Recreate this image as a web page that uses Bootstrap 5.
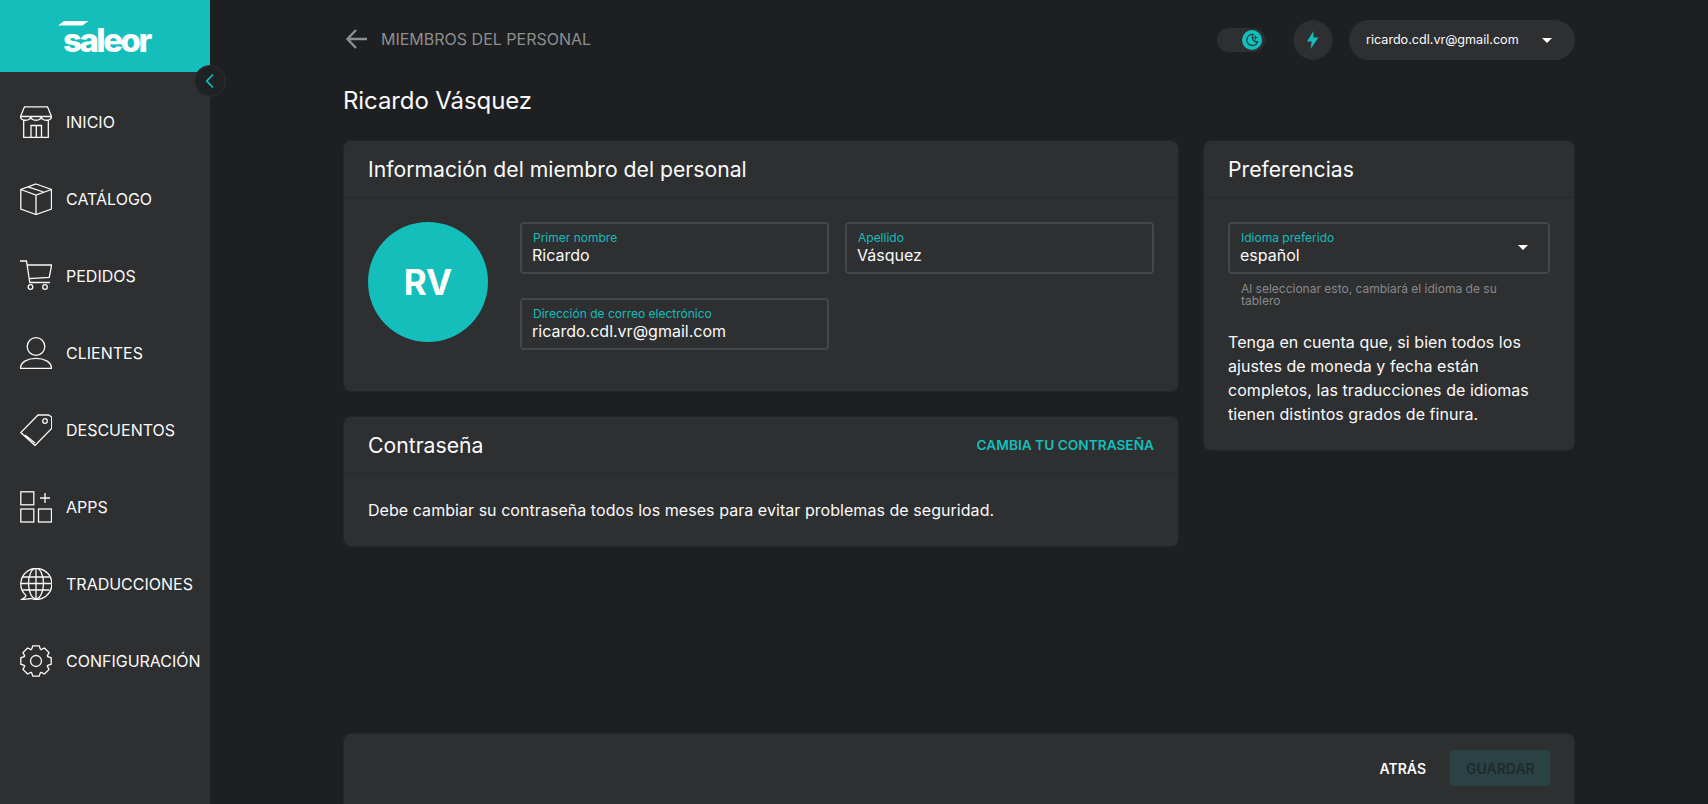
<!DOCTYPE html>
<html lang="es">
<head>
  <meta charset="UTF-8"/>
  <meta name="viewport" content="width=device-width, initial-scale=1.0"/>
  <title>Ricardo Vásquez</title>
  <link href="https://cdn.jsdelivr.net/npm/bootstrap@5.3.0/dist/css/bootstrap.min.css" rel="stylesheet"/>
  <style>
    html, body {
      height: 100%;
      overflow: hidden;
    }
    body {
      display: flex;
      background-color: #1d1f21;
      color: #fafafa;
      font-family: Inter, "Liberation Sans", sans-serif;
      font-size: 16px;
    }

    /* Sidebar */
    .side-bar {
      width: 210px;
      flex: none;
      position: relative;
      background-color: #2e2f31;
    }
    .side-logo {
      height: 72px;
      background-color: #13bebb;
      position: relative;
    }
    .side-logo svg {
      position: absolute;
      left: 57px;
      top: 20px;
    }
    .logo-word {
      position: absolute;
      left: 63px;
      top: 17px;
      color: #fff;
      font-size: 33px;
      line-height: 46px;
      font-weight: 800;
      letter-spacing: -2.5px;
    }
    .side-toggle {
      position: absolute;
      left: 194px;
      top: 65px;
      width: 32px;
      height: 32px;
      border-radius: 50%;
      background-color: #1f2123;
      border: 1px solid #2e2f31;
    }
    .side-nav {
      padding-top: 11px;
    }
    .side-link {
      display: flex;
      align-items: center;
      height: 77px;
      padding-left: 20px;
      gap: 14px;
      color: #fafafa;
      text-decoration: none;
      font-size: 16px;
      white-space: nowrap;
    }
    .side-link svg {
      flex: none;
      fill: none;
      stroke: #fafafa;
      stroke-width: 1.3;
    }

    /* Main */
    .main-area {
      flex-grow: 1;
      display: flex;
      flex-direction: column;
      min-width: 0;
    }
    .page-wrap {
      width: 1232px;
      margin: 0 auto;
      flex-grow: 1;
      display: flex;
      flex-direction: column;
    }
    .top-row {
      height: 81px;
      padding-top: 20px;
      align-items: flex-start;
    }
    .crumb {
      height: 37px;
      color: #8d8e8f;
      font-size: 16px;
      gap: 14px;
    }
    .mode-toggle {
      width: 48px;
      height: 24px;
      margin-top: 8px;
      margin-right: 28px;
      border-radius: 12px;
      background-color: #2e2f31;
      padding: 2px 3px;
    }
    .mode-knob {
      width: 20px;
      height: 20px;
      border-radius: 50%;
      background-color: #13bebb;
    }
    .bolt-btn {
      width: 40px;
      height: 40px;
      border-radius: 50%;
      background-color: #2e2f31;
      border: 1px solid #292a2c;
      margin-right: 16px;
    }
    .user-pill {
      width: 226px;
      height: 40px;
      border-radius: 20px;
      background-color: #2e2f31;
      padding: 0 23px 0 17px;
      font-size: 12.6px;
      color: #fafafa;
    }
    .down-caret {
      width: 0;
      height: 0;
      border-left: 5px solid transparent;
      border-right: 5px solid transparent;
      border-top: 5px solid #fff;
    }
    .page-title {
      font-size: 24px;
      line-height: 40px;
      font-weight: 400;
      margin: 0 0 19px;
      letter-spacing: -.1px;
    }
    .two-cols {
      display: grid;
      grid-template-columns: 836px 1fr;
      gap: 24px;
      align-items: start;
    }
    .panel {
      background-color: #2e2f31;
      border: 1px solid #252628;
      border-radius: 8px;
      color: #fafafa;
    }
    .panel .card-header {
      height: 57px;
      padding: 1px 24px 0;
      background: transparent;
      border-bottom: 1px solid #27282a;
      display: flex;
      align-items: center;
      justify-content: space-between;
    }
    .panel-title {
      font-size: 21.2px;
      font-weight: 400;
      margin: 0;
    }
    .panel .card-body {
      padding: 24px;
    }
    .avatar {
      width: 120px;
      height: 120px;
      flex: none;
      border-radius: 50%;
      background-color: #13bebb;
      color: #fff;
      font-size: 35px;
      font-weight: 700;
      margin-right: 32px;
    }
    .field-grid {
      flex-grow: 1;
      display: grid;
      grid-template-columns: 1fr 1fr;
      gap: 24px 16px;
      padding-bottom: 17px;
    }
    .field-box {
      height: 52px;
      border: 2px solid #454648;
      border-radius: 4px;
      padding: 7px 10px 0;
      position: relative;
    }
    .field-box label {
      display: block;
      color: #13bebb;
      font-size: 12px;
      line-height: 13px;
      margin-left: 1px;
    }
    .field-box input {
      display: block;
      width: 100%;
      border: 0;
      padding: 0;
      background: transparent;
      color: #fafafa;
      font-size: 16px;
      line-height: 22px;
      outline: 0;
    }
    .field-box .down-caret {
      position: absolute;
      right: 20px;
      top: 21px;
    }
    .field-help {
      color: #88898a;
      font-size: 12px;
      line-height: 12px;
      margin: 9px 14px 23px 13px;
    }
    .note-text {
      line-height: 24px;
      margin: 0;
      letter-spacing: .05px;
    }
    .teal-link {
      color: #13bebb;
      font-size: 13.7px;
      font-weight: 600;
      text-decoration: none;
    }

    /* Bottom bar */
    .save-bar {
      height: 71px;
      flex: none;
      margin-top: auto;
      padding: 16px 24px 0;
      background-color: #2e2f31;
      border: 1px solid #252628;
      border-bottom: 0;
      border-radius: 8px 8px 0 0;
      gap: 8px;
    }
    .bar-btn {
      height: 36px;
      padding: 0 16px;
      border: 0;
      font-size: 14px;
      font-weight: 600;
      border-radius: 4px;
    }
    .back-btn {
      color: #fafafa;
      background: transparent;
    }
    .save-btn {
      width: 100px;
      color: #1f2a2d;
      background-color: #2a4244;
    }
    .save-btn:disabled {
      color: #1f2a2d;
      background-color: #2a4244;
      opacity: 1;
    }
  </style>
</head>
<body>
  <!-- Sidebar -->
  <aside class="side-bar">
    <div class="side-logo">
      <svg width="34" height="8" viewBox="0 0 34 8"><polygon points="1,5.500 7,1 31.500,1 25.500,5.500" fill="#fff"/></svg>
      <span class="logo-word">saleor</span>
    </div>
    <button class="side-toggle d-flex align-items-center justify-content-center p-0" type="button" aria-label="Contraer">
      <svg width="10" height="16" viewBox="0 0 10 16"><path d="M8 1.500 1.800 8 8 14.500" fill="none" stroke="#13bebb" stroke-width="1.800"/></svg>
    </button>
    <nav class="side-nav">
      <a class="side-link" href="#">
        <svg width="32" height="32" viewBox="0 0 32 32"><path d="M4.500.8h23l4 9.700H.5zM.5 10.500c0 5 10 5 10.300 0 .2 5 10.200 5 10.400 0 .3 5 10.300 5 10.300 0M3.700 14v17.300h24.600V14M11 31V19.500h10.500V31M16.300 19.500V31"/></svg>
        INICIO
      </a>
      <a class="side-link" href="#">
        <svg width="32" height="32" viewBox="0 0 32 32"><path d="M16 1 31.500 6.500V26L16 31.500.8 26V6.500zM.8 6.500 16 12l15.500-5.500M16 12v19.500M8 3.800 23.500 9"/></svg>
        CATÁLOGO
      </a>
      <a class="side-link" href="#">
        <svg width="32" height="32" viewBox="0 0 32 32"><path d="M0 1h6.500l3.300 21.500H30M7.300 5h24.400l-2.500 12.500-20 1.200"/><circle cx="10.500" cy="27" r="2.300"/><circle cx="25" cy="27" r="2.300"/></svg>
        PEDIDOS
      </a>
      <a class="side-link" href="#">
        <svg width="32" height="32" viewBox="0 0 32 32"><circle cx="16" cy="9.500" r="8.800"/><path d="M.5 31.500c0-13.500 31-13.500 31 0z"/></svg>
        CLIENTES
      </a>
      <a class="side-link" href="#">
        <svg width="32" height="32" viewBox="0 0 32 32"><path d="M18 1h10.500l3.200 2v11.500L15 31.500.8 18.500zM5 21l10 8"/><circle cx="25" cy="7" r="2.300"/></svg>
        DESCUENTOS
      </a>
      <a class="side-link" href="#">
        <svg width="32" height="32" viewBox="0 0 32 32"><rect x=".8" y=".8" width="13" height="13"/><rect x=".8" y="18" width="13" height="13"/><rect x="18.500" y="18" width="13" height="13"/><path d="M25 2v10M20 7h10"/></svg>
        APPS
      </a>
      <a class="side-link" href="#">
        <svg width="32" height="32" viewBox="0 0 32 32"><path d="M6 27.500A15.500 15.500 0 1 1 11 30.500L.8 31.800c2.500-1 4.700-2.400 5.200-4.300z"/><ellipse cx="16" cy="15.500" rx="7.500" ry="15.300"/><path d="M16 .5v30M.5 15.500h31M2.500 9h27M2.500 22h27"/></svg>
        TRADUCCIONES
      </a>
      <a class="side-link" href="#">
        <svg width="32" height="32" viewBox="0 0 32 32">
          <circle cx="16" cy="16" r="5.500"/>
          <path id="gearTooth" d="M11.400 4.900 12.800.8h6.400l1.400 4.100"/>
          <use href="#gearTooth" transform="rotate(45 16 16)"/>
          <use href="#gearTooth" transform="rotate(90 16 16)"/>
          <use href="#gearTooth" transform="rotate(135 16 16)"/>
          <use href="#gearTooth" transform="rotate(180 16 16)"/>
          <use href="#gearTooth" transform="rotate(225 16 16)"/>
          <use href="#gearTooth" transform="rotate(270 16 16)"/>
          <use href="#gearTooth" transform="rotate(315 16 16)"/>
        </svg>
        CONFIGURACIÓN
      </a>
    </nav>
  </aside>

  <!-- Main Content -->
  <main class="main-area">
    <div class="page-wrap">
      <div class="top-row d-flex justify-content-between">
        <a class="crumb d-flex align-items-center text-decoration-none" href="#">
          <svg width="24" height="24" viewBox="0 0 24 24"><path d="M13 3 4.500 12l8.500 9M4.500 12H24" fill="none" stroke="#8d8e8f" stroke-width="2.400"/></svg>
          MIEMBROS DEL PERSONAL
        </a>
        <div class="d-flex align-items-start">
          <div class="mode-toggle d-flex justify-content-end">
            <span class="mode-knob d-flex align-items-center justify-content-center">
              <svg width="14" height="14" viewBox="0 0 14 14"><path d="M8 1.500A5.500 5.500 0 1 0 12.500 9 5 5 0 0 1 8 1.500z" fill="none" stroke="#1d3a3c" stroke-width="1.300"/><path d="M10.500 2.500v4M8.500 4.500h4" stroke="#1d3a3c" stroke-width="1"/></svg>
            </span>
          </div>
          <div class="bolt-btn d-flex align-items-center justify-content-center">
            <svg width="12" height="18" viewBox="0 0 12 18"><polygon points="6.500,0 0,10.500 4.700,10.500 3.500,18 11.500,6.500 6.300,6.500" fill="#13bebb"/></svg>
          </div>
          <div class="user-pill d-flex align-items-center justify-content-between">
            <span>ricardo.cdl.vr@gmail.com</span>
            <span class="down-caret"></span>
          </div>
        </div>
      </div>

      <h1 class="page-title">Ricardo Vásquez</h1>

      <div class="two-cols">
        <div class="d-flex flex-column gap-4">
          <section class="card panel">
            <div class="card-header"><h2 class="panel-title">Información del miembro del personal</h2></div>
            <div class="card-body d-flex align-items-start">
              <div class="avatar d-flex align-items-center justify-content-center">RV</div>
              <div class="field-grid">
                <div class="field-box">
                  <label for="firstName">Primer nombre</label>
                  <input id="firstName" type="text" value="Ricardo"/>
                </div>
                <div class="field-box">
                  <label for="lastName">Apellido</label>
                  <input id="lastName" type="text" value="Vásquez"/>
                </div>
                <div class="field-box">
                  <label for="email">Dirección de correo electrónico</label>
                  <input id="email" type="text" value="ricardo.cdl.vr@gmail.com"/>
                </div>
              </div>
            </div>
          </section>

          <section class="card panel">
            <div class="card-header">
              <h2 class="panel-title">Contraseña</h2>
              <a class="teal-link" href="#">CAMBIA TU CONTRASEÑA</a>
            </div>
            <div class="card-body">
              <p class="note-text">Debe cambiar su contraseña todos los meses para evitar problemas de seguridad.</p>
            </div>
          </section>
        </div>

        <section class="card panel">
          <div class="card-header"><h2 class="panel-title">Preferencias</h2></div>
          <div class="card-body">
            <div class="field-box">
              <label for="language">Idioma preferido</label>
              <input id="language" type="text" value="español"/>
              <span class="down-caret"></span>
            </div>
            <p class="field-help">Al seleccionar esto, cambiará el idioma de su tablero</p>
            <p class="note-text">Tenga en cuenta que, si bien todos los ajustes de moneda y fecha están completos, las traducciones de idiomas tienen distintos grados de finura.</p>
          </div>
        </section>
      </div>

      <div class="save-bar d-flex justify-content-end align-items-start">
        <button class="btn bar-btn back-btn" type="button">ATRÁS</button>
        <button class="btn bar-btn save-btn" type="button" disabled>GUARDAR</button>
      </div>
    </div>
  </main>

  <script src="https://cdn.jsdelivr.net/npm/bootstrap@5.3.0/dist/js/bootstrap.bundle.min.js"></script>
</body>
</html>
